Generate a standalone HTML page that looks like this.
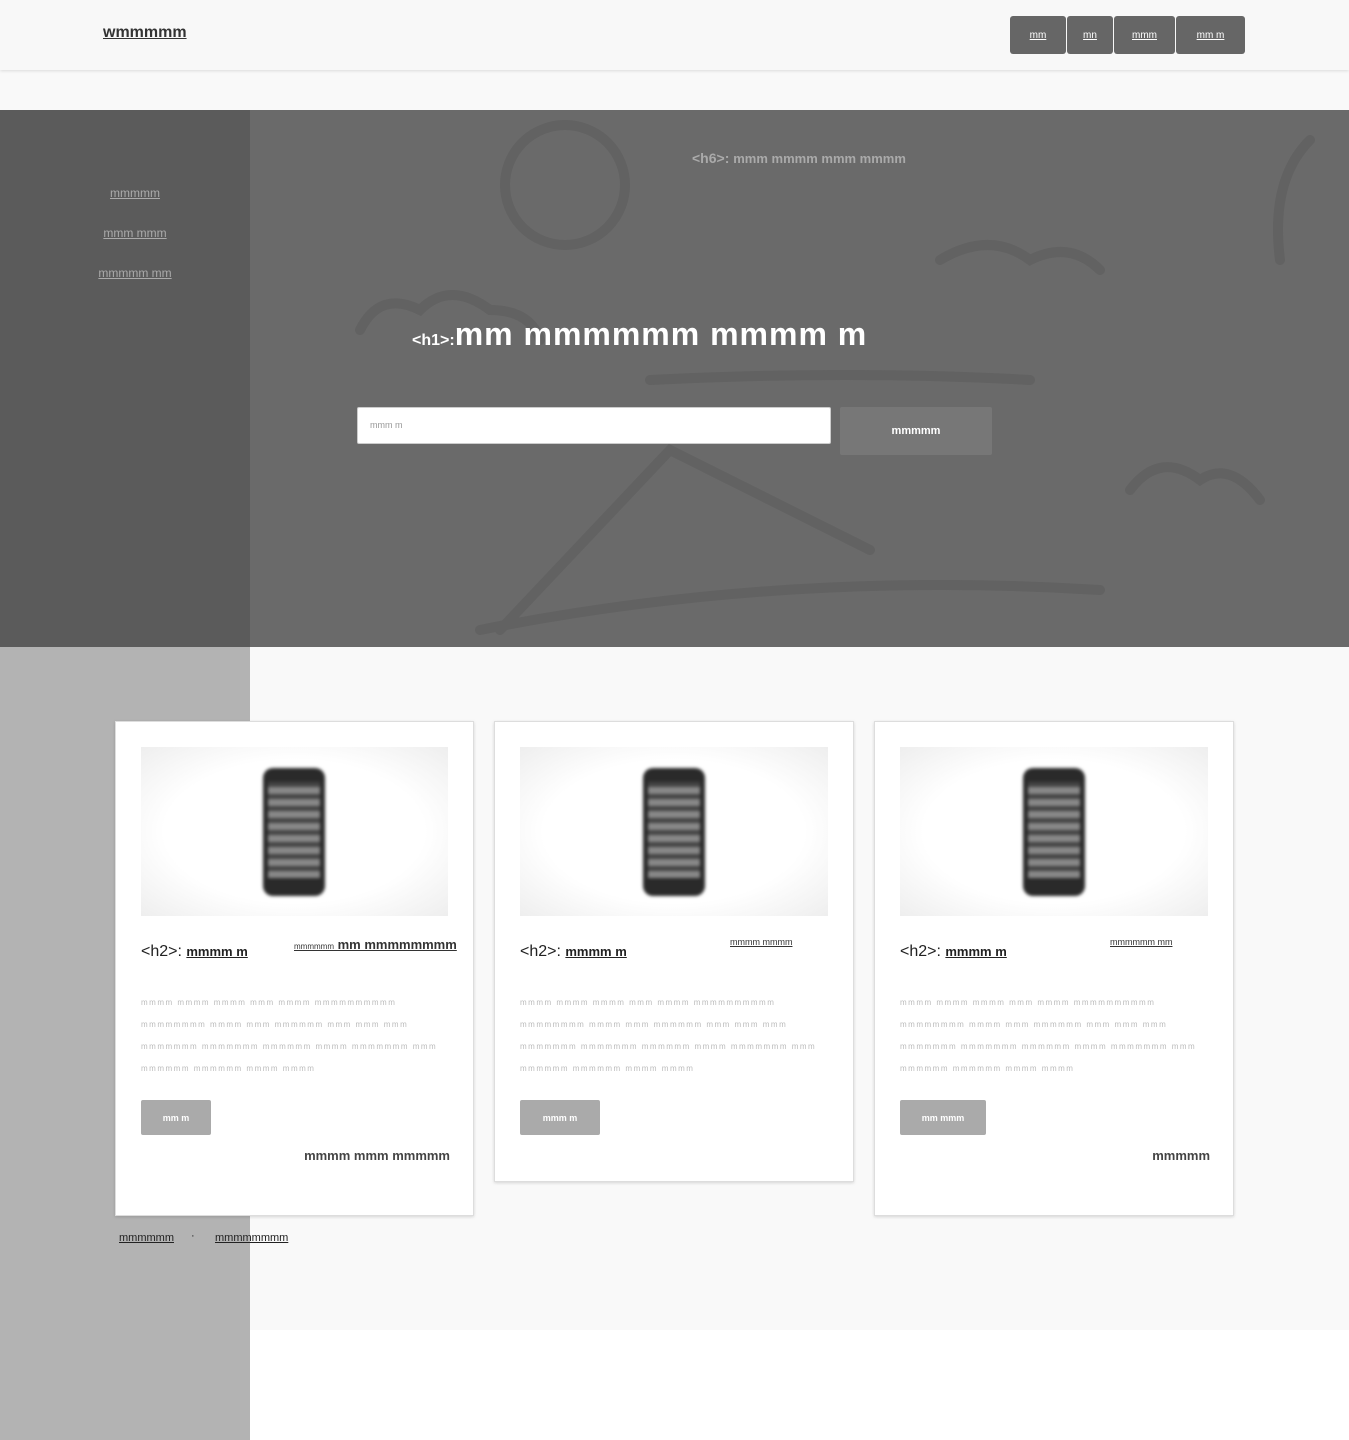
<!DOCTYPE html>
<html><head><meta charset="utf-8"><style>
*{margin:0;padding:0;box-sizing:border-box}
body{width:1349px;height:1440px;position:relative;background:#fff;font-family:"Liberation Sans",sans-serif;overflow:hidden}
.abs{position:absolute}
.hdr{left:0;top:0;width:1349px;height:70px;background:#f8f8f8;box-shadow:0 1px 3px rgba(0,0,0,.12)}
.logo{left:103px;top:24px;font-weight:bold;font-size:16px;color:#333;text-decoration:underline;letter-spacing:0px}
.nav{top:16px;height:38px;background:#666;border-radius:3px;color:#fff;font-size:10px;text-decoration:underline;display:flex;align-items:center;justify-content:center}
.hero{left:0;top:110px;width:1349px;height:537px;background:#6a6a6a}
.side{left:0;top:110px;width:250px;height:537px;background:#5b5b5b}
.sl{color:#aaa;font-size:12px;text-decoration:underline;width:250px;text-align:center;left:10px}
.gray{left:0;top:647px;width:250px;height:793px;background:#b3b3b3}
.main{left:250px;top:647px;width:1099px;height:683px;background:#f9f9f9}
.card{background:#fff;border:1px solid #ddd;box-shadow:0 1px 3px rgba(0,0,0,.15)}
.img{background:radial-gradient(ellipse at center,#fff 60%,#eee 100%)}
.phone{width:62px;height:128px;background:#2a2a2a;border-radius:10px;filter:blur(1.5px)}
.scr{position:absolute;left:5px;top:14px;width:52px;height:96px;background:repeating-linear-gradient(0deg,#888 0 7px,#444 7px 12px)}
.h2{font-size:16px;color:#222}
.h2 u{font-weight:bold;font-size:13px}
.txt{font-size:8px;color:#bbb;line-height:22px;letter-spacing:1.5px}
.btn{background:#aaa;color:#fff;font-size:9px;font-weight:bold;display:flex;align-items:center;justify-content:center;border-radius:2px}
.rt{font-weight:bold;color:#444;font-size:13px;text-align:right}
</style></head><body>
<div class="abs" style="left:0;top:70px;width:1349px;height:40px;background:#f9f9f9"></div>
<div class="abs hdr"></div>
<div class="abs logo">wmmmmm</div>
<div class="abs nav" style="left:1010px;width:56px">mm</div>
<div class="abs nav" style="left:1067px;width:46px">mn</div>
<div class="abs nav" style="left:1114px;width:61px">mmm</div>
<div class="abs nav" style="left:1176px;width:69px">mm m</div>

<div class="abs hero"></div>
<svg class="abs" style="left:250px;top:110px" width="1099" height="537"><g fill="none" stroke="#626262" stroke-width="10" stroke-linecap="round">
<circle cx="315" cy="75" r="60"/><path d="M110 220 q20-40 60-20 q30-30 70 0 q40 0 50 30"/><path d="M250 520 L420 340 L620 440"/><path d="M230 520 q300 -60 620 -40"/><path d="M690 150 q50-30 90 0 q40-20 70 10"/><path d="M1060 30 q-40 40 -30 120"/><path d="M880 380 q30-40 70-10 q30-20 60 20"/><path d="M400 270 q200 -10 380 0"/></g></svg>
<div class="abs side"></div>
<div class="abs sl" style="left:10px;top:186px">mmmmm</div>
<div class="abs sl" style="left:10px;top:226px">mmm mmm</div>
<div class="abs sl" style="left:10px;top:266px">mmmmm mm</div>
<div class="abs" style="left:692px;top:150px;color:#aaa;font-size:14px;font-weight:bold">&lt;h6&gt;: <span style="font-size:13px">mmm mmmm mmm mmmm</span></div>
<div class="abs" style="left:412px;top:316px;color:#fff;font-size:16px;font-weight:bold">&lt;h1&gt;:<span style="font-size:32px;letter-spacing:1px">mm mmmmmm mmmm m</span></div>
<div class="abs" style="left:357px;top:407px;width:474px;height:37px;background:#fff;border:1px solid #ccc;border-radius:2px;font-size:9px;color:#999;padding:12px 12px">mmm m</div>
<div class="abs" style="left:840px;top:407px;width:152px;height:48px;background:#777;border-radius:2px;color:#fff;font-size:11px;font-weight:bold;display:flex;align-items:center;justify-content:center">mmmmm</div>

<div class="abs gray"></div>
<div class="abs main"></div>

<div class="abs card" style="left:115px;top:721px;width:359px;height:495px"></div>
<div class="abs card" style="left:494px;top:721px;width:360px;height:461px"></div>
<div class="abs card" style="left:874px;top:721px;width:360px;height:495px"></div>

<div class="abs img" style="left:141px;top:747px;width:307px;height:169px"><div class="phone abs" style="left:122px;top:21px"><div class="scr"></div></div></div>
<div class="abs img" style="left:520px;top:747px;width:308px;height:169px"><div class="phone abs" style="left:123px;top:21px"><div class="scr"></div></div></div>
<div class="abs img" style="left:900px;top:747px;width:308px;height:169px"><div class="phone abs" style="left:123px;top:21px"><div class="scr"></div></div></div>

<div class="abs h2" style="left:141px;top:943px">&lt;h2&gt;: <u>mmmm m</u></div>
<div class="abs h2" style="left:520px;top:943px">&lt;h2&gt;: <u>mmmm m</u></div>
<div class="abs h2" style="left:900px;top:943px">&lt;h2&gt;: <u>mmmm m</u></div>
<div class="abs" style="left:294px;top:937px;font-size:13px;font-weight:bold;color:#333;text-decoration:underline"><span style="font-size:8px;font-weight:normal">mmmmmm</span> mm mmmmmmmm</div>
<div class="abs" style="left:730px;top:937px;font-size:9px;color:#333;text-decoration:underline">mmmm mmmm</div>
<div class="abs" style="left:1110px;top:937px;font-size:9px;color:#333;text-decoration:underline">mmmmmm mm</div>

<div class="abs txt" style="left:141px;top:992px;width:307px">mmmm mmmm mmmm mmm mmmm mmmmmmmmmm mmmmmmmm mmmm mmm mmmmmm mmm mmm mmm mmmmmmm mmmmmmm mmmmmm mmmm mmmmmmm mmm mmmmmm mmmmmm mmmm mmmm</div>
<div class="abs txt" style="left:520px;top:992px;width:307px">mmmm mmmm mmmm mmm mmmm mmmmmmmmmm mmmmmmmm mmmm mmm mmmmmm mmm mmm mmm mmmmmmm mmmmmmm mmmmmm mmmm mmmmmmm mmm mmmmmm mmmmmm mmmm mmmm</div>
<div class="abs txt" style="left:900px;top:992px;width:307px">mmmm mmmm mmmm mmm mmmm mmmmmmmmmm mmmmmmmm mmmm mmm mmmmmm mmm mmm mmm mmmmmmm mmmmmmm mmmmmm mmmm mmmmmmm mmm mmmmmm mmmmmm mmmm mmmm</div>

<div class="abs btn" style="left:141px;top:1100px;width:70px;height:35px">mm m</div>
<div class="abs btn" style="left:520px;top:1100px;width:80px;height:35px">mmm m</div>
<div class="abs btn" style="left:900px;top:1100px;width:86px;height:35px">mm mmm</div>

<div class="abs rt" style="left:141px;top:1148px;width:309px">mmmm mmm mmmmm</div>
<div class="abs rt" style="left:900px;top:1148px;width:310px">mmmmm</div>

<div class="abs" style="left:119px;top:1232px;font-size:11px;color:#222;text-decoration:underline">mmmmmm</div>
<div class="abs" style="left:191px;top:1230px;font-size:11px;color:#222">·</div>
<div class="abs" style="left:215px;top:1232px;font-size:11px;color:#222;text-decoration:underline">mmmmmmmm</div>
</body></html>
